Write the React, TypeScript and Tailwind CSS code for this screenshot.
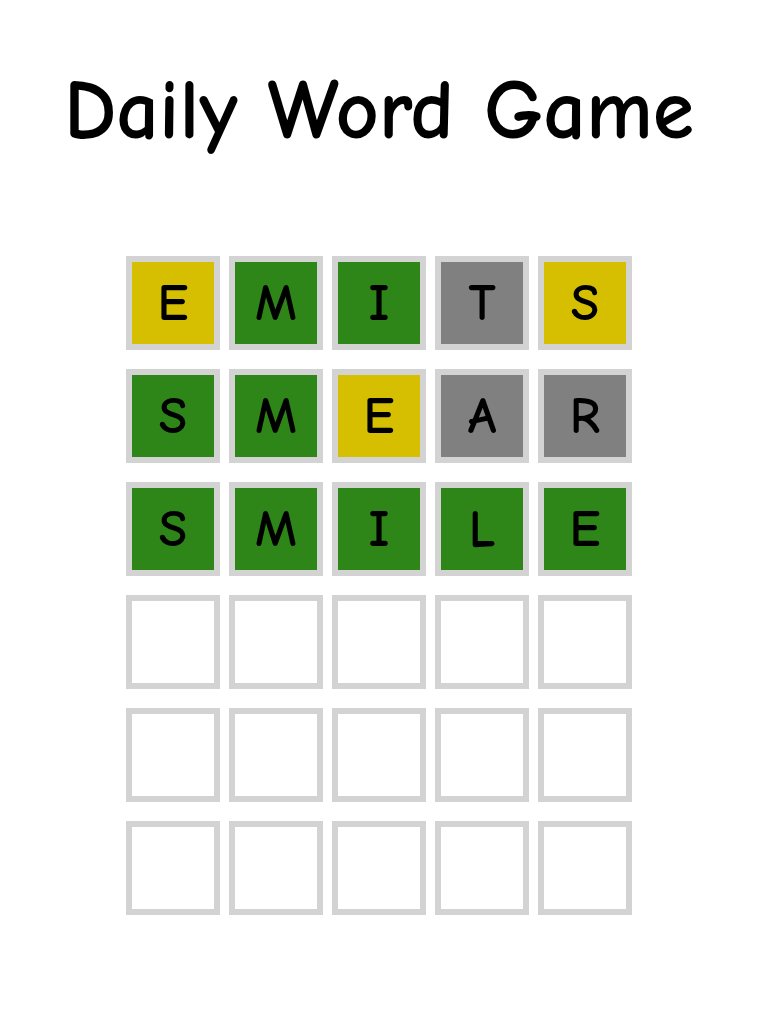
import React from "react";

type Mark = "hit" | "near" | "miss" | "";

const rows: { letter: string; mark: Mark }[][] = [
  [
    { letter: "E", mark: "near" },
    { letter: "M", mark: "hit" },
    { letter: "I", mark: "hit" },
    { letter: "T", mark: "miss" },
    { letter: "S", mark: "near" },
  ],
  [
    { letter: "S", mark: "hit" },
    { letter: "M", mark: "hit" },
    { letter: "E", mark: "near" },
    { letter: "A", mark: "miss" },
    { letter: "R", mark: "miss" },
  ],
  [
    { letter: "S", mark: "hit" },
    { letter: "M", mark: "hit" },
    { letter: "I", mark: "hit" },
    { letter: "L", mark: "hit" },
    { letter: "E", mark: "hit" },
  ],
];

// pad out to six guesses
while (rows.length < 6) {
  rows.push(Array.from({ length: 5 }, () => ({ letter: "", mark: "" as Mark })));
}

const tileColor = (mark: Mark) => {
  if (mark === "hit") return "bg-[#2e8619]";
  if (mark === "near") return "bg-[#d6bf00]";
  if (mark === "miss") return "bg-[#808080]";
  return "bg-white";
};

const Tile = ({ letter, mark }: { letter: string; mark: Mark }) => (
  <div
    className={`w-[94px] h-[94px] border-[6px] border-[#d3d3d3] flex items-center justify-center text-[52px] font-semibold text-black ${tileColor(mark)}`}
  >
    {letter}
  </div>
);

const App = () => {
  return (
    <main
      className="w-full min-h-screen bg-white flex flex-col items-center pr-[11px]"
      style={{ fontFamily: '"Comic Sans MS", "Comic Neue", "DejaVu Sans", cursive' }}
    >
      <h1 className="mt-[61px] text-[84px] font-bold leading-[1.2] text-black">
        Daily Word Game
      </h1>
      <div className="mt-[94px] flex flex-col gap-y-[19px]">
        {rows.map((row, i) => (
          <div key={i} className="flex gap-x-[9px]">
            {row.map((tile, j) => (
              <Tile key={j} letter={tile.letter} mark={tile.mark} />
            ))}
          </div>
        ))}
      </div>
    </main>
  );
};

export default App;
